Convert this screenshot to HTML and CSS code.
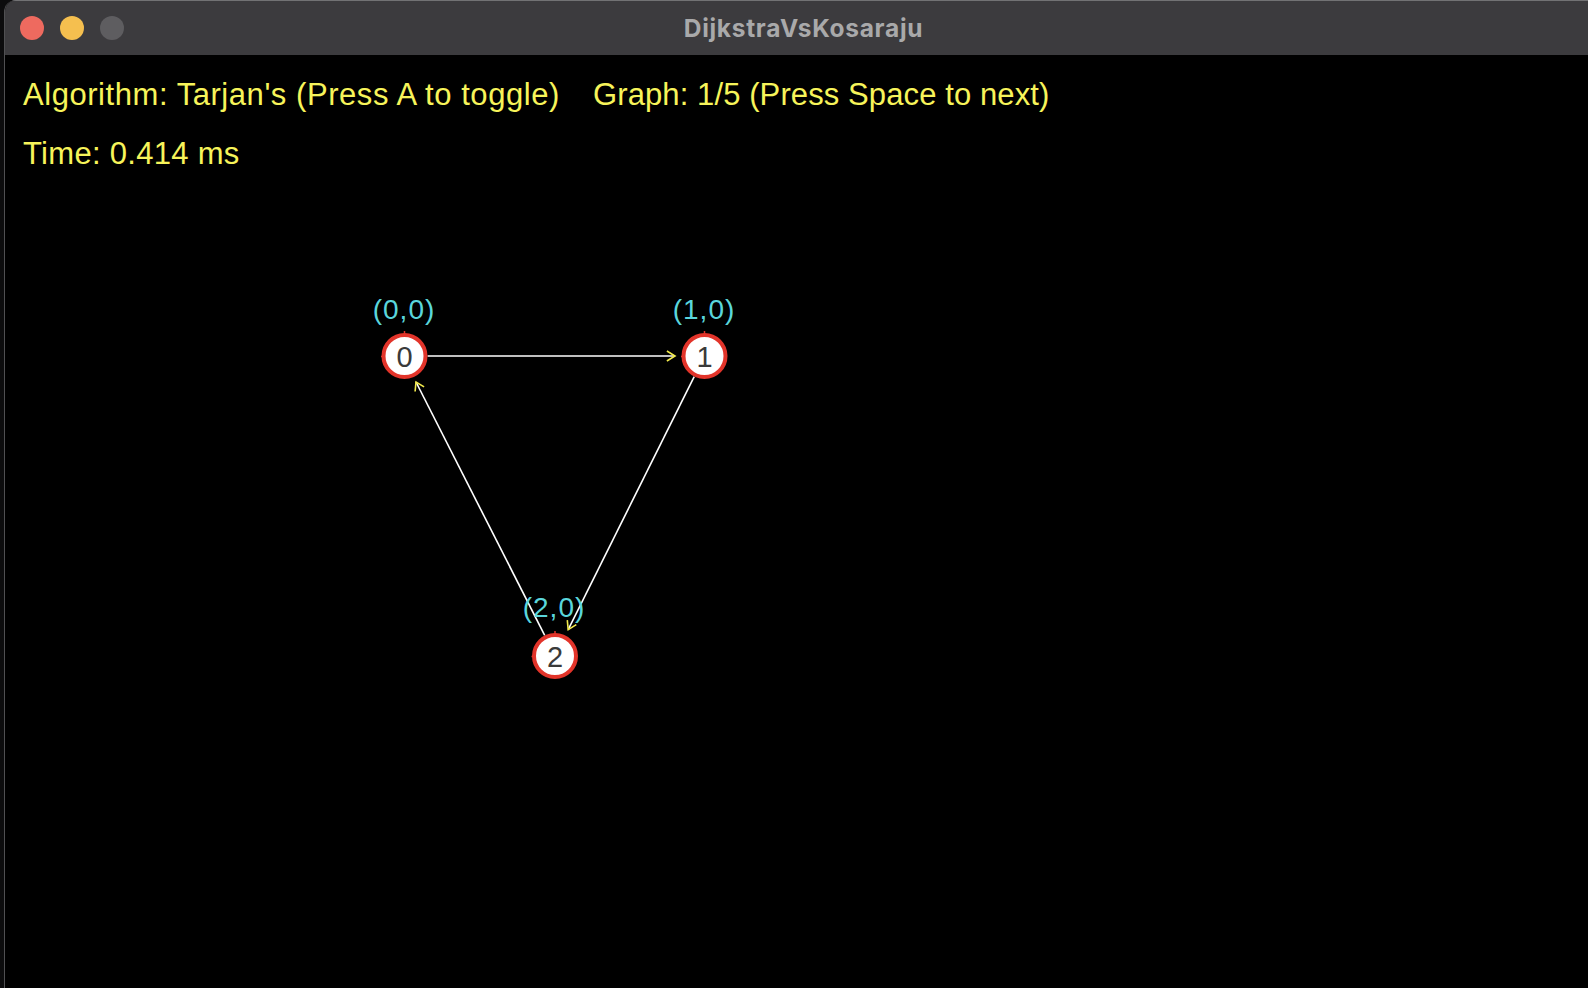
FILE: index.html
```html
<!DOCTYPE html>
<html lang="en">
<head>
<meta charset="utf-8">
<title>DijkstraVsKosaraju</title>
<link rel="stylesheet" href="styles.css">
</head>
<body>
<div class="window">
  <div class="titlebar">
    <div class="lights">
      <span class="light close"></span>
      <span class="light minimize"></span>
      <span class="light zoom"></span>
    </div>
    <div class="title">DijkstraVsKosaraju</div>
    <div></div>
  </div>
  <div class="content">
    <div class="hud">
      <span class="wide">Algorithm: Tarjan's (Press A to toggle)</span>
      <span class="narrow">Graph: 1/5 (Press Space to next)</span>
      <span>Time: 0.414 ms</span>
    </div>
    <svg class="canvas" width="1592" height="819" viewBox="5 169 1592 819" xmlns="http://www.w3.org/2000/svg">
      <g class="edges">
        <line x1="427.5" y1="356" x2="675" y2="356"/>
        <line x1="694.2" y1="376.6" x2="568.2" y2="629.6"/>
        <line x1="544.7" y1="635.4" x2="416" y2="382"/>
      </g>
      <g class="arrows">
        <polyline points="666.9,351 675,356 666.9,361"/>
        <polyline points="576.3,624.6 568.2,629.6 567.3,620.2"/>
        <polyline points="415.1,391.5 416,382 424.1,386.9"/>
      </g>
      <g class="nodes">
        <circle cx="404.5" cy="356" r="21"/>
        <circle cx="704.5" cy="356" r="21"/>
        <circle cx="555" cy="656" r="21"/>
      </g>
      <g class="ticks">
        <line x1="404.5" y1="331" x2="404.5" y2="334"/>
        <line x1="381" y1="356.5" x2="384" y2="356.5"/>
        <line x1="704.5" y1="331" x2="704.5" y2="334"/>
        <line x1="681" y1="356.5" x2="684" y2="356.5"/>
        <line x1="555" y1="631" x2="555" y2="634"/>
        <line x1="531.5" y1="656.5" x2="534.5" y2="656.5"/>
      </g>
      <g class="ids">
        <text x="404.5" y="367">0</text>
        <text x="704.5" y="367">1</text>
        <text x="555" y="667">2</text>
      </g>
      <g class="labels">
        <text x="404" y="318.5">(0,0)</text>
        <text x="704" y="318.5">(1,0)</text>
        <text x="554" y="616.5">(2,0)</text>
      </g>
    </svg>
  </div>
</div>
</body>
</html>
```
FILE: styles.css
```css
html, body {
  margin: 0;
  padding: 0;
}
body {
  width: 1588px;
  height: 988px;
  overflow: hidden;
  background: #0c0c0d;
}
.window {
  margin-left: 4px;
  width: 1597px;
  height: 988px;
  background: #000;
  border-left: 1px solid #505052;
  border-top-left-radius: 12px;
  overflow: hidden;
}
.titlebar {
  box-sizing: border-box;
  height: 55px;
  background: #3c3b3e;
  border-top: 1px solid #727274;
  display: grid;
  grid-template-columns: 1fr auto 1fr;
  align-items: center;
}
.lights {
  display: flex;
  gap: 16px;
  padding-left: 15px;
}
.light {
  width: 24px;
  height: 24px;
  border-radius: 50%;
  display: block;
}
.close { background: #ee6a5f; }
.minimize { background: #f5bf4f; }
.zoom { background: #5e5d60; }
.title {
  font-family: Inter, "Liberation Sans", sans-serif;
  font-weight: 700;
  font-size: 24.5px;
  color: #a9a9aa;
  letter-spacing: 0.7px;
}
.content {
  display: flex;
  flex-direction: column;
}
.hud {
  padding: 24px 0 0 18px;
  display: grid;
  grid-template-columns: 570px auto;
  row-gap: 28px;
  font-family: "Liberation Sans", Arial, sans-serif;
  font-size: 31px;
  line-height: 31px;
  letter-spacing: 0.3px;
  color: #f7f45a;
  white-space: nowrap;
}
.hud .wide {
  letter-spacing: 0.55px;
}
.hud .narrow {
  letter-spacing: 0.1px;
}
.canvas {
  display: block;
}
.edges line {
  stroke: #ffffff;
  stroke-width: 1.6;
}
.arrows polyline {
  fill: none;
  stroke: #f2ea4c;
  stroke-width: 1.6;
}
.nodes circle {
  fill: #ffffff;
  stroke: #e2342a;
  stroke-width: 4;
}
.ticks line {
  stroke: #e2342a;
  stroke-width: 1.5;
}
.ids text {
  font-family: "Liberation Sans", Arial, sans-serif;
  font-size: 29px;
  fill: #3a3a3a;
  text-anchor: middle;
}
.labels text {
  font-family: "Liberation Sans", Arial, sans-serif;
  font-size: 28px;
  fill: #5ad6dc;
  text-anchor: middle;
  letter-spacing: 1px;
}
```
